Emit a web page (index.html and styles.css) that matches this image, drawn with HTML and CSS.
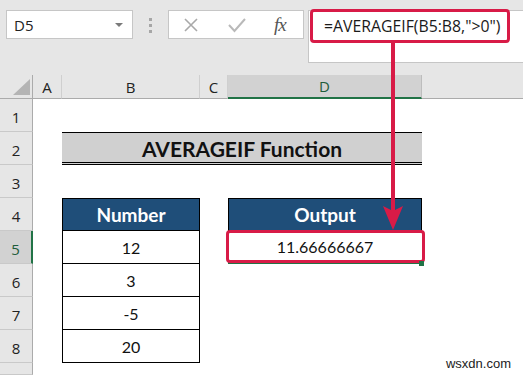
FILE: index.html
```html
<!DOCTYPE html>
<html lang="en">
<head>
  <meta charset="UTF-8">
  <title>AVERAGEIF Function</title>
  <link rel="stylesheet" href="styles.css">
</head>
<body>
  <div class="toolbar">
    <div class="name-box">
      <span>D5</span>
      <span class="caret"></span>
    </div>
    <div class="grip"><i></i><i></i><i></i></div>
    <div class="fx-buttons">
      <svg class="ico-x" width="16" height="16" viewBox="0 0 16 16"><path d="M2 2 L14 14 M14 2 L2 14" stroke="#a9a9a9" stroke-width="1.6" fill="none"/></svg>
      <svg class="ico-check" width="18" height="16" viewBox="0 0 18 16"><path d="M1 8 L6.5 14 L17 2" stroke="#b9b9b9" stroke-width="2" fill="none"/></svg>
      <span class="fx">fx</span>
    </div>
    <div class="formula-bar">
      <div class="formula-mark">=AVERAGEIF(B5:B8,"&gt;0")</div>
    </div>
  </div>

  <div class="sheet">
    <!-- column headers -->
    <div class="corner"><span class="tri"></span></div>
    <div class="col-head">A</div>
    <div class="col-head">B</div>
    <div class="col-head">C</div>
    <div class="col-head active">D</div>
    <div class="col-head last"></div>

    <!-- row 1 -->
    <div class="row-head">1</div>
    <div class="blank span-5"></div>

    <!-- row 2 -->
    <div class="row-head">2</div>
    <div class="blank"></div>
    <div class="title">AVERAGEIF Function</div>
    <div class="blank"></div>

    <!-- row 3 -->
    <div class="row-head">3</div>
    <div class="blank span-5"></div>

    <!-- row 4 -->
    <div class="row-head">4</div>
    <div class="blank"></div>
    <div class="th">Number</div>
    <div class="blank"></div>
    <div class="th">Output</div>
    <div class="blank"></div>

    <!-- row 5 -->
    <div class="row-head active">5</div>
    <div class="blank"></div>
    <div class="td">12</div>
    <div class="blank"></div>
    <div class="td result">
      11.66666667
      <span class="result-mark"></span>
      <span class="fill-handle"></span>
    </div>
    <div class="blank"></div>

    <!-- rows 6-8 -->
    <div class="row-head">6</div>
    <div class="blank"></div>
    <div class="td">3</div>
    <div class="blank span-3"></div>

    <div class="row-head">7</div>
    <div class="blank"></div>
    <div class="td">-5</div>
    <div class="blank span-3"></div>

    <div class="row-head">8</div>
    <div class="blank"></div>
    <div class="td">20</div>
    <div class="blank span-3"></div>

    <!-- row 9, only its top edge shows -->
    <div class="row-head"></div>
    <div class="blank span-5"></div>
  </div>

  <!-- callout arrow from formula to result -->
  <svg class="arrow" width="30" height="190" viewBox="0 0 30 190">
    <path d="M15 0 V170" stroke="#d81b47" stroke-width="4" fill="none"/>
    <path d="M5 163 L15 168 L25 163 L15 187 Z" fill="#d81b47"/>
  </svg>

  <div class="watermark">wsxdn.com</div>
</body>
</html>
```

FILE: styles.css
```css
/* Base */
body {
  margin: 0;
  width: 523px;
  height: 375px;
  overflow: hidden;
  position: relative;
  background: #e6e6e6;
  font-family: 'Open Sans', sans-serif;
  color: #222;
}

/* Toolbar */
.toolbar {
  display: flex;
  align-items: flex-start;
  height: 75px;
  padding-top: 10px;
  box-sizing: border-box;
}

.name-box {
  width: 127px;
  height: 29px;
  margin-left: 6px;
  box-sizing: border-box;
  border: 1px solid #c6c6c6;
  background: #fff;
  display: flex;
  align-items: center;
  justify-content: space-between;
  padding: 0 9px 0 7px;
  font-size: 15px;
}

.caret {
  width: 0;
  height: 0;
  border-left: 4px solid transparent;
  border-right: 4px solid transparent;
  border-top: 4px solid #7a7a7a;
}

.grip {
  display: flex;
  flex-direction: column;
  gap: 3px;
  margin: 8px 0 0 16px;
}

.grip i {
  display: block;
  width: 3px;
  height: 3px;
  background: #a6a6a6;
}

.fx-buttons {
  width: 136px;
  height: 29px;
  margin-left: 16px;
  box-sizing: border-box;
  border: 1px solid #c6c6c6;
  background: #fff;
  display: flex;
  align-items: center;
}

.ico-x { margin-left: 14px; }
.ico-check { margin-left: 29px; }

.fx {
  margin-left: 28px;
  font-family: 'Liberation Serif', serif;
  font-style: italic;
  font-size: 19px;
  color: #555;
  letter-spacing: -1px;
}

.formula-bar {
  flex: 1;
  height: 53px;
  margin-left: 4px;
  box-sizing: border-box;
  border: 1px solid #c6c6c6;
  border-right: none;
  background: #fff;
  position: relative;
}

.formula-mark {
  position: absolute;
  left: 1px;
  top: -2px;
  width: 200px;
  height: 34px;
  box-sizing: border-box;
  border: 3px solid #d81b47;
  border-radius: 4px;
  padding-left: 11px;
  font-size: 15.8px;
  line-height: 28px;
  color: #1a1a1a;
}

/* Sheet grid */
.sheet {
  display: grid;
  grid-template-columns: 33px 29px 138px 28px 194px 1fr;
  grid-template-rows: 24px repeat(8, 33px) 1fr;
  height: 300px;
  background: #fff;
}

.corner,
.col-head,
.row-head {
  background: #e6e6e6;
  box-sizing: border-box;
}

.corner {
  border-right: 1px solid #ababab;
  border-bottom: 1px solid #ababab;
  position: relative;
}

.tri {
  position: absolute;
  right: 2px;
  bottom: 3px;
  width: 0;
  height: 0;
  border-left: 17px solid transparent;
  border-bottom: 16px solid #b4b4b4;
}

.col-head {
  border-bottom: 1px solid #ababab;
  border-right: 1px solid #cfcfcf;
  display: flex;
  align-items: center;
  justify-content: center;
  font-size: 15px;
  color: #222;
}

.col-head.active {
  background: #d2d2d2;
  border-bottom: 2px solid #217346;
  border-right: 1px solid #bdbdbd;
  color: #1f5d3b;
}

.col-head.last {
  border-right: none;
}

.row-head {
  border-right: 1px solid #ababab;
  border-bottom: 1px solid #c9c9c9;
  display: flex;
  align-items: center;
  justify-content: center;
  font-size: 15px;
  padding-top: 3px;
}

.row-head.active {
  background: #d2d2d2;
  border-right: 2px solid #217346;
  color: #1f5d3b;
}

.span-5 { grid-column: span 5; }
.span-3 { grid-column: span 3; }

/* Cells */
.title {
  grid-column: span 3;
  background: #d0d0d0;
  border-top: 1px solid #000;
  border-bottom: 3px double #000;
  box-sizing: border-box;
  display: flex;
  align-items: center;
  justify-content: center;
  padding-top: 2px;
  font-family: 'Lato', sans-serif;
  font-weight: bold;
  font-size: 21px;
  color: #111;
}

.th,
.td {
  box-sizing: border-box;
  display: flex;
  align-items: center;
  justify-content: center;
  font-family: 'Lato', sans-serif;
  border: 1px solid #000;
  border-top: none;
}

.th {
  background: #1f4e79;
  border-top: 1px solid #000;
  color: #fff;
  font-weight: bold;
  font-size: 19px;
}

.td {
  background: #fff;
  font-size: 16px;
  color: #111;
}

.td.result {
  border: none;
  border-bottom: 2px solid #217346;
  position: relative;
}

.result-mark {
  position: absolute;
  left: -2px;
  right: -3px;
  top: -1px;
  bottom: -1px;
  border: 3px solid #d81b47;
  border-radius: 4px;
}

.fill-handle {
  position: absolute;
  right: -2px;
  bottom: -4px;
  width: 5px;
  height: 5px;
  background: #217346;
}

/* Annotations */
.arrow {
  position: absolute;
  left: 378px;
  top: 43px;
}

.watermark {
  position: absolute;
  right: 12px;
  bottom: 4px;
  font-family: 'Liberation Sans', sans-serif;
  font-size: 13px;
  color: #222;
}
```
